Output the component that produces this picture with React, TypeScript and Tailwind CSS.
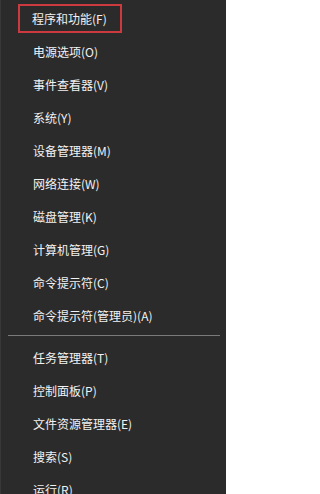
const topItems = [
  "电源选项(O)",
  "事件查看器(V)",
  "系统(Y)",
  "设备管理器(M)",
  "网络连接(W)",
  "磁盘管理(K)",
  "计算机管理(G)",
  "命令提示符(C)",
  "命令提示符(管理员)(A)",
];

const bottomItems = ["任务管理器(T)", "控制面板(P)", "文件资源管理器(E)", "搜索(S)", "运行(R)"];

function MenuRow({ label }: { label: string }) {
  return (
    <div className="flex h-[33px] items-center pl-[32px] text-[12px] text-[#f2f2f2]">{label}</div>
  );
}

export default function App() {
  return (
    <div
      className="h-[494px] w-[226px] overflow-hidden border-l border-[#383838] bg-[#2b2b2b] pt-[2px]"
      style={{ fontFamily: '"Noto Sans CJK SC", "Noto Sans", sans-serif' }}
    >
      <div className="flex h-[33px] items-center">
        <div className="ml-[17px] flex h-[29px] w-[104px] items-center border-2 border-[#cc3a40] pl-[12px] text-[12px] text-[#f2f2f2]">
          程序和功能(F)
        </div>
      </div>
      {topItems.map((item) => (
        <MenuRow key={item} label={item} />
      ))}
      <div className="mb-[5px] ml-[7px] mr-[6px] mt-[3px] h-px bg-[#7a7a7a]" />
      {bottomItems.map((item) => (
        <MenuRow key={item} label={item} />
      ))}
    </div>
  );
}
